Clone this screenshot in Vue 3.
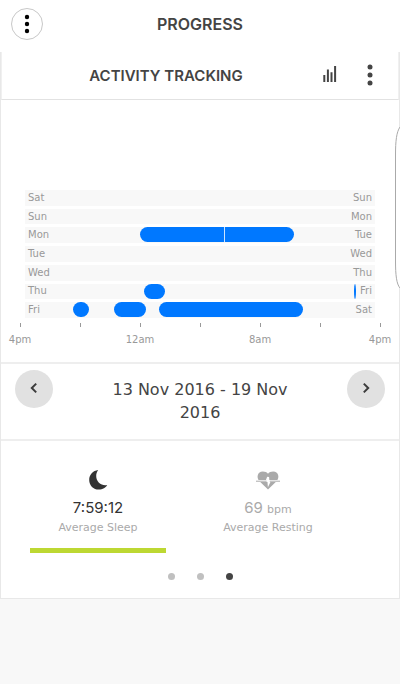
<script setup>
import { ref } from 'vue'

const days = [
  { from: 'Sat', to: 'Sun', sleeps: [] },
  { from: 'Sun', to: 'Mon', sleeps: [] },
  { from: 'Mon', to: 'Tue', sleeps: [{ start: 115, length: 154, wake: 84 }] },
  { from: 'Tue', to: 'Wed', sleeps: [] },
  { from: 'Wed', to: 'Thu', sleeps: [] },
  { from: 'Thu', to: 'Fri', sleeps: [{ start: 119, length: 21 }, { start: 329, length: 2 }] },
  {
    from: 'Fri',
    to: 'Sat',
    sleeps: [{ start: 48, length: 16 }, { start: 89, length: 32 }, { start: 134, length: 144 }],
  },
]
const trackSpan = 350
const ticks = ['4pm', '', '12am', '', '8am', '', '4pm']
const page = ref(2)

const barStyle = (s) => ({
  left: `${(s.start / trackSpan) * 100}%`,
  width: `${(s.length / trackSpan) * 100}%`,
})
const wakeStyle = (s) => ({ left: `${(s.wake / s.length) * 100}%` })
</script>

<template>
  <div class="screen">
    <header class="topbar">
      <button class="menu" type="button" aria-label="Menu">
        <svg width="6" height="20" viewBox="0 0 6 20">
          <circle cx="3" cy="3" r="2.2" /><circle cx="3" cy="10" r="2.2" /><circle cx="3" cy="17" r="2.2" />
        </svg>
      </button>
      <h1>PROGRESS</h1>
    </header>

    <main class="card">
      <div class="card-head">
        <h2>ACTIVITY TRACKING</h2>
        <button class="icon-btn" type="button" aria-label="Chart">
          <svg width="14" height="20" viewBox="0 0 14 20">
            <path d="M0.3 10h2v7h-2zM3.9 4.6h2V17h-2zM7.5 7.2h2V17h-2zM11.1 1h2v16h-2z" />
          </svg>
        </button>
        <button class="icon-btn" type="button" aria-label="More">
          <svg width="6" height="22" viewBox="0 0 6 22">
            <circle cx="3" cy="3" r="2.5" /><circle cx="3" cy="11" r="2.5" /><circle cx="3" cy="19" r="2.5" />
          </svg>
        </button>
      </div>

      <section class="chart">
        <div class="tracks">
          <div v-for="day in days" :key="day.from" class="track">
            <span>{{ day.from }}</span>
            <span>{{ day.to }}</span>
            <i
              v-for="s in day.sleeps"
              :key="s.start"
              class="bar"
              :class="{ thin: s.length < 4 }"
              :style="barStyle(s)"
            >
              <i v-if="s.wake" class="wake" :style="wakeStyle(s)"></i>
            </i>
          </div>
        </div>
        <div class="axis">
          <div v-for="(label, i) in ticks" :key="i" class="tick">
            <i></i><span>{{ label }}</span>
          </div>
        </div>
      </section>

      <section class="period">
        <button class="round" type="button" aria-label="Previous week">
          <svg width="10" height="14" viewBox="0 0 10 14"><path d="M7.2 1.600 2.8 6l4.4 4.400" /></svg>
        </button>
        <p>13 Nov 2016 - 19 Nov 2016</p>
        <button class="round" type="button" aria-label="Next week">
          <svg width="10" height="14" viewBox="0 0 10 14"><path d="M2.8 1.600 7.2 6l-4.4 4.400" /></svg>
        </button>
      </section>

      <section class="summary">
        <div class="stats">
          <button class="stat active" type="button">
            <svg width="20" height="22" viewBox="0 0 20 22">
              <path d="M10.200 1C5 1.600 1.200 5.800 1.200 10.900c0 5.500 4.300 9.700 9.600 9.700 3.900 0 7.200-2 8.400-4.500C13.600 17.300 8.200 13 8.200 7 8.200 4.600 9 2.600 10.200 1z" />
            </svg>
            <strong>7:59:12</strong>
            <small>Average Sleep</small>
          </button>
          <button class="stat" type="button">
            <svg width="24" height="22" viewBox="0 0 24 22">
              <path d="M12 20.500 3.200 12C.2 8.600 1.400 2.500 6.800 2.500c2.300 0 4.200.8 5.200 2.300 1-1.500 2.900-2.300 5.200-2.300 5.400 0 6.600 6.100 3.600 9.500z" />
              <path class="gap" d="M0 12h10.600l1.500-4 .5 6.500 1.200-2.500H24" />
              <path class="pulse" d="M0 12.200h10.600M13.800 12.200H24" />
            </svg>
            <strong>69 <em>bpm</em></strong>
            <small>Average Resting</small>
          </button>
        </div>
        <nav class="dots" aria-label="Pages">
          <button
            v-for="n in 3"
            :key="n"
            type="button"
            :class="{ on: page === n - 1 }"
            :aria-label="`Page ${n}`"
            @click="page = n - 1"
          ></button>
        </nav>
      </section>
      <svg class="edge" width="6" height="166" viewBox="0 0 6 166">
        <path d="M6 2C2.500 7 1.500 16 1.500 30v106c0 14 1 23 4.500 27" />
      </svg>
    </main>
  </div>
</template>

<style>
body {
  background: #f8f8f8;
}
</style>

<style scoped>
.screen {
  font-family: Inter, "Liberation Sans", sans-serif;
  color: #444;
  overflow-x: hidden;
}
* {
  box-sizing: border-box;
}
button {
  font: inherit;
  color: inherit;
  border: 0;
  padding: 0;
  background: none;
  cursor: pointer;
}
svg {
  display: block;
  fill: currentColor;
}
.topbar {
  display: grid;
  grid-template-columns: 32px 1fr 32px;
  align-items: center;
  height: 52px;
  padding: 0 11px 4px;
  background: #fff;
}
h1,
h2 {
  margin: 0;
  font-weight: 600;
  text-align: center;
}
h1 {
  font-size: 16px;
}
h2 {
  font-size: 15px;
}
.menu {
  display: grid;
  place-items: center;
  width: 32px;
  height: 32px;
  border: 1px solid #c8c8c8;
  border-radius: 50%;
  color: #000;
}
.card {
  position: relative;
  border: 1px solid #e8e8e8;
  border-top: 0;
  background: #fff;
}
.card-head {
  display: grid;
  grid-template-columns: 1fr 40px 40px;
  align-items: center;
  height: 48px;
  padding: 0 8px 1px 20px;
  border: 1px solid #e2e2e2;
  border-top: 0;
  border-left-color: #f0f0f0;
  border-right-color: #f0f0f0;
}
.icon-btn {
  display: grid;
  place-items: center;
  height: 40px;
}
.chart {
  padding: 90px 0 15px;
  color: #999;
  font-family: "DejaVu Sans", sans-serif;
  font-size: 10px;
  border-bottom: 2px solid #eee;
}
.tracks {
  display: grid;
  grid-template-rows: repeat(7, 1fr);
  gap: 3px;
  height: 128px;
  margin: 0 24px;
}
.track {
  position: relative;
  display: flex;
  justify-content: space-between;
  align-items: center;
  padding: 0 3px;
  background: #f8f8f8;
  line-height: 14px;
}
.bar {
  position: absolute;
  top: 0;
  height: 15px;
  border-radius: 8px;
  background: #0078ff;
}
.thin {
  border-radius: 50%;
}
.wake {
  position: absolute;
  top: 0;
  width: 1px;
  height: 15px;
  background: #cce4ff;
}
.axis {
  display: flex;
  justify-content: space-between;
  margin: 5px 19px 0;
}
.tick {
  display: flex;
  flex-direction: column;
  align-items: center;
  width: 0;
}
.tick i {
  width: 1px;
  height: 4px;
  margin-bottom: 5px;
  background: #999;
}
.tick span {
  line-height: 15px;
}
.period {
  display: flex;
  justify-content: space-between;
  align-items: flex-start;
  padding: 6px 14px 15px;
  border-bottom: 2px solid #eee;
}
.period p {
  width: 200px;
  margin: 8px 0 0;
  font-family: "DejaVu Sans", sans-serif;
  font-size: 16px;
  line-height: 23px;
  text-align: center;
}
.round {
  display: grid;
  place-items: center;
  width: 38px;
  height: 38px;
  border-radius: 50%;
  background: #e1e1e1;
}
.round svg {
  fill: none;
  stroke: #3c3c3c;
  stroke-width: 2;
}
.summary {
  padding: 28px 29px 18px;
}
.stats {
  display: flex;
  gap: 34px;
}
.stat {
  display: flex;
  flex-direction: column;
  align-items: center;
  width: 40%;
  padding-bottom: 11px;
  border-bottom: 5px solid transparent;
  color: #aaa;
}
.stat.active {
  border-bottom-color: #bdd832;
  color: #333;
}
.stat strong {
  height: 22px;
  margin-top: 6px;
  font-size: 15px;
  font-weight: 400;
  line-height: 22px;
}
.stat em,
.stat small {
  font-family: "DejaVu Sans", sans-serif;
  font-size: 11px;
  font-style: normal;
}
.stat em {
  line-height: 1;
}
.stat small {
  line-height: 18px;
  color: #aaa;
}
.gap,
.pulse {
  fill: none;
  stroke: #fff;
  stroke-width: 2;
}
.pulse {
  stroke: #aaa;
  stroke-width: 1;
}
.dots {
  display: flex;
  justify-content: center;
  gap: 22px;
  margin-top: 20px;
}
.dots button {
  width: 7px;
  height: 7px;
  border-radius: 50%;
  background: #c0c0c0;
}
.dots .on {
  background: #444;
}
.edge {
  position: absolute;
  top: 73px;
  right: -1px;
}
.edge path {
  fill: #fff;
  stroke: #aaa;
}
</style>
